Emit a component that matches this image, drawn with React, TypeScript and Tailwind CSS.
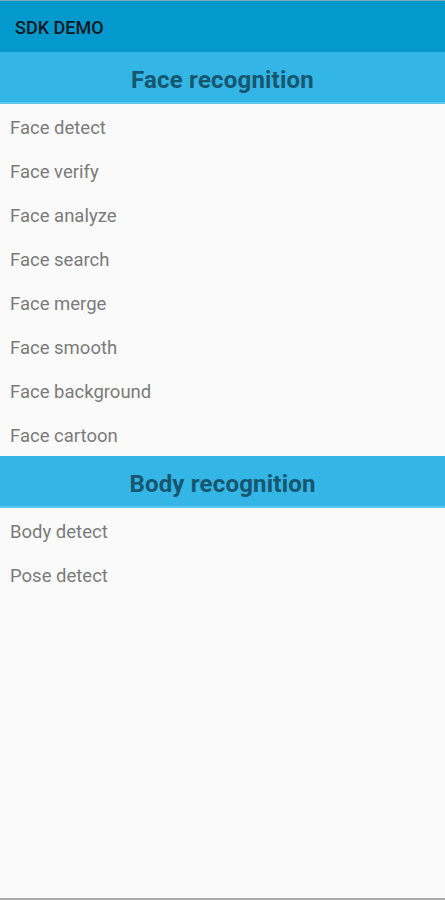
import React from 'react'

const faceItems = [
  'Face detect',
  'Face verify',
  'Face analyze',
  'Face search',
  'Face merge',
  'Face smooth',
  'Face background',
  'Face cartoon',
]

const bodyItems = ['Body detect', 'Pose detect']

function SectionHeader({ title }: { title: string }) {
  return (
    <div className="h-[52px] bg-[#33b5e5] border-b-2 border-[#5cc6ee] flex items-center justify-center pt-[6px]">
      <h2 className="text-[24px] leading-none font-bold text-[#16566f] tracking-[0.2px]">{title}</h2>
    </div>
  )
}

function Item({ label }: { label: string }) {
  return (
    <div className="h-[44px] flex items-center pt-[5px] px-[10px] text-[18.5px] leading-none text-[#7a7a7a]">{label}</div>
  )
}

export default function App() {
  return (
    <div
      className="w-[445px] h-[900px] flex flex-col bg-[#fafafa] border-t border-b-2 border-t-[#7aa9bd] border-b-[#a8a8a8] overflow-hidden"
      style={{ fontFamily: 'Roboto, "Noto Sans", sans-serif' }}
    >
      {/* App bar */}
      <div className="h-[51px] bg-[#0399cc] flex items-center pt-[3px] px-[15px]">
        <span className="text-[18px] leading-none font-medium text-[#0b1a22]">SDK DEMO</span>
      </div>

      <SectionHeader title="Face recognition" />
      <div className="flex flex-col">
        {faceItems.map((t) => (
          <Item key={t} label={t} />
        ))}
      </div>

      <SectionHeader title="Body recognition" />
      <div className="flex flex-col">
        {bodyItems.map((t) => (
          <Item key={t} label={t} />
        ))}
      </div>
    </div>
  )
}
